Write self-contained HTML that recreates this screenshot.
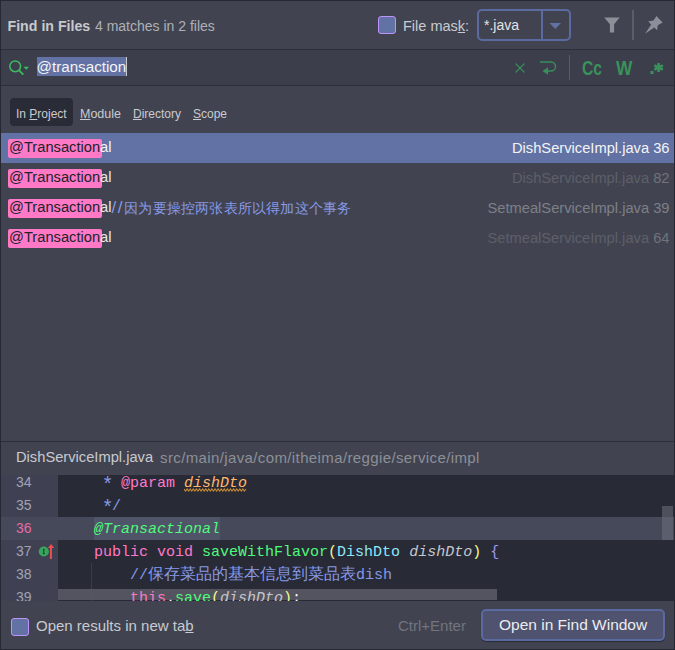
<!DOCTYPE html>
<html><head><meta charset="utf-8">
<style>
*{margin:0;padding:0;box-sizing:border-box}
html,body{width:675px;height:650px;overflow:hidden;background:#262834}
body{position:relative;font-family:"Liberation Sans",sans-serif}
.a{position:absolute}
.t{position:absolute;white-space:nowrap;line-height:1}
.sep{position:absolute;background:#2c2e39}
.mono{font-family:"Liberation Mono",monospace}
.ast{display:inline-block;transform:translateY(1.8px) scale(1.3);transform-origin:50% 35%}
.hlb{position:absolute;background:#ff79c6;border-radius:2px;left:8px;width:94px;height:19px}
.dk{color:#22232c}
.cb{position:absolute;width:17.5px;height:18px;border:1.5px solid #bd93f9;border-radius:3px;background:#6272a4}
</style></head><body>
<div class="a" style="left:1px;top:1px;width:673px;height:648px;background:#414450"></div>

<!-- header -->
<div class="t" style="left:7.5px;top:19px;font-size:14.2px;font-weight:bold;color:#c8c9cd">Find in Files</div>
<div class="t" style="left:95px;top:19px;font-size:14px;color:#aeb0b6">4 matches in 2 files</div>

<div class="cb" style="left:378px;top:16px"></div>
<div class="t" style="left:403px;top:19px;font-size:14.5px;color:#c9cacf">File mas<span style="text-decoration:underline">k</span>:</div>

<div class="a" style="left:477px;top:9px;width:94px;height:32px;border:2px solid #5b6aa0;border-radius:5px"></div>
<div class="a" style="left:541px;top:11px;width:1.5px;height:28px;background:#5b6aa0"></div>
<div class="t" style="left:484px;top:18px;font-size:14px;color:#e2e3e6">*.java</div>
<svg class="a" style="left:549px;top:22px" width="13" height="8"><path d="M0.5 1 L12 1 L6.25 7 Z" fill="#6272a4"/></svg>

<svg class="a" style="left:603px;top:16px" width="18" height="18"><path d="M1.2 1.4 H16.7 L11.1 8.3 V16.6 H6.9 V8.3 Z" fill="#8c8e98"/></svg>
<div class="a" style="left:632px;top:10px;width:2px;height:30px;background:#5b5d68"></div>
<svg class="a" style="left:640px;top:10px" width="30" height="30"><path d="M16.4 6 L22.6 12.5 L17.8 15.2 L17 20.2 L14.3 17.5 L5 23.8 L11.1 14.8 L8.3 11.2 L13.6 10.4 Z" fill="#8c8e98"/></svg>

<div class="sep" style="left:1px;top:49px;width:673px;height:1px"></div>
<!-- search row -->
<div class="a" style="left:1px;top:50px;width:673px;height:35px;background:#3c3e4c"></div>
<svg class="a" style="left:6px;top:56px" width="26" height="22"><circle cx="9.2" cy="10.3" r="5.4" fill="none" stroke="#3dbb5e" stroke-width="1.5"/><path d="M12.9 14.1 L17.3 18.6" stroke="#3dbb5e" stroke-width="1.8"/><path d="M17.5 10.8 H23 L20.25 13.8 Z" fill="#3dbb5e"/></svg>
<div class="a" style="left:37px;top:57px;width:89px;height:19px;background:#6272a4"></div>
<div class="a" style="left:126px;top:57px;width:1px;height:19px;background:#c9cacd"></div>
<div class="t" style="left:36.5px;top:59px;font-size:15.2px;color:#f4f4f6">@transaction</div>

<svg class="a" style="left:513px;top:61px" width="14" height="14"><path d="M2.5 2.5 L11.5 11.5 M11.5 2.5 L2.5 11.5" stroke="#36905a" stroke-width="1.1"/></svg>
<svg class="a" style="left:538px;top:58px" width="22" height="20"><path d="M2 4 H13 A4.5 4.5 0 0 1 13 13 H7" fill="none" stroke="#36905a" stroke-width="1.4"/><path d="M4.5 13 L10 9.2 L10 16.8 Z" fill="#36905a"/></svg>
<div class="a" style="left:569px;top:55px;width:1px;height:25px;background:#5b5d68"></div>
<div class="t" style="left:581.5px;top:58.5px;font-size:16px;font-weight:bold;color:#38925a;transform:scale(0.98,1.22);transform-origin:0 0">Cc</div>
<div class="t" style="left:616px;top:58.5px;font-size:16px;font-weight:bold;color:#38925a;transform:scale(1.08,1.22);transform-origin:0 0">W</div>
<svg class="a" style="left:648px;top:60px" width="20" height="18"><rect x="2.5" y="11" width="3" height="3" fill="#38925a"/><path d="M10.6 3 V12 M6.3 5.3 L14.9 9.7 M6.3 9.7 L14.9 5.3" stroke="#38925a" stroke-width="2.6"/></svg>

<div class="sep" style="left:1px;top:85px;width:673px;height:1px"></div>

<!-- scope tabs -->
<div class="a" style="left:10px;top:98px;width:63px;height:28px;background:#292b37;border-radius:4px"></div>
<div class="t" style="left:16px;top:108px;font-size:12px;color:#c9cacf">In <u>P</u>roject</div>
<div class="t" style="left:80px;top:108px;font-size:12.5px;color:#c9cacf"><u>M</u>odule</div>
<div class="t" style="left:133px;top:108px;font-size:12px;color:#c9cacf"><u>D</u>irectory</div>
<div class="t" style="left:193px;top:108px;font-size:12px;color:#c9cacf"><u>S</u>cope</div>

<!-- results -->
<div class="a" style="left:1px;top:133px;width:673px;height:30px;background:#6272a4"></div>
<div class="hlb" style="top:139px"></div>
<div class="hlb" style="top:169px"></div>
<div class="hlb" style="top:199px"></div>
<div class="hlb" style="top:229px"></div>
<div class="t" style="left:9px;top:140px;font-size:14.7px;color:#f4f4f6"><span class="dk">@Transaction</span>al</div>
<div class="t" style="left:9px;top:170px;font-size:14.7px;color:#e8e8ea"><span class="dk">@Transaction</span>al</div>
<div class="t" style="left:9px;top:200px;font-size:14.7px;color:#e8e8ea"><span class="dk">@Transaction</span>al<span style="color:#8799e6;font-size:17px;letter-spacing:1.6px;position:relative;top:0.5px;line-height:0">//</span><span style="color:#8799e6;font-size:14px;letter-spacing:0.2px;position:relative;top:1px;line-height:0">因为要操控两张表所以得加这个事务</span></div>
<div class="t" style="left:9px;top:230px;font-size:14.7px;color:#e8e8ea"><span class="dk">@Transaction</span>al</div>

<div class="t" style="right:5.5px;top:141px;font-size:14.7px;color:#f4f4f6">DishServiceImpl.java 36</div>
<div class="t" style="right:5.5px;top:171px;font-size:14.7px;color:#5d5f69">DishServiceImpl.java <span style="color:#70727c">82</span></div>
<div class="t" style="right:5.5px;top:201px;font-size:14.7px;color:#7d7f88">SetmealServiceImpl.java 39</div>
<div class="t" style="right:5.5px;top:231px;font-size:14.7px;color:#5d5f69">SetmealServiceImpl.java <span style="color:#70727c">64</span></div>

<div class="sep" style="left:1px;top:441px;width:673px;height:1px"></div>
<!-- preview header -->
<div class="t" style="left:16px;top:450px;font-size:14.7px;color:#c9cacf">DishServiceImpl.java</div>
<div class="t" style="left:160px;top:450px;font-size:15px;letter-spacing:0.38px;color:#8d8f98">src/main/java/com/itheima/reggie/service/impl</div>

<!-- editor -->
<div class="a" style="left:1px;top:475px;width:57px;height:126px;background:#3f4152"></div>
<div class="a" style="left:58px;top:475px;width:616px;height:126px;background:#282a36"></div>
<div class="a" style="left:1px;top:517px;width:673px;height:23px;background:#464959"></div>
<div class="a" style="left:94px;top:517px;width:126px;height:23px;background:#4f5468"></div>
<div class="a" style="left:91px;top:563px;width:1px;height:38px;background:#3a3c48"></div>
<div class="t mono" style="left:58px;top:475px;width:616px;height:126px;overflow:hidden;font-size:15px;line-height:23px;white-space:pre">
<div style="position:absolute;left:0;top:114px;width:439px;height:11px;background:rgba(90,92,102,0.85)"></div>
<div style="position:absolute;left:0;top:-3px;color:#8799e6">     <span class="ast">*</span> <span style="color:#ff79c6">@param</span> <span style="color:#ffb86c;font-style:italic">dishDto</span></div>
<div style="position:absolute;left:0;top:20px;color:#8799e6">     <span class="ast">*</span>/</div>
<div style="position:absolute;left:0;top:43px;color:#50fa7b;font-style:italic">    @Transactional</div>
<div style="position:absolute;left:0;top:66px;color:#f8f8f2">    <span style="color:#ff79c6">public void</span> <span style="color:#50fa7b">saveWithFlavor</span><span style="color:#f1fa8c">(</span><span style="color:#8be9fd">DishDto</span> <span style="font-style:italic;color:#c6c7cc">dishDto</span><span style="color:#f1fa8c">)</span> <span style="color:#a098f0">{</span></div>
<div style="position:absolute;left:0;top:89px;color:#8799e6">        //<span style="font-size:16px">保存菜品的基本信息到菜品表</span>dish</div>
<div style="position:absolute;left:0;top:112px;color:#f8f8f2">        <span style="color:#ff79c6">this</span>.<span style="color:#50fa7b">save</span><span style="color:#f1fa8c">(</span><span style="font-style:italic;color:#c6c7cc">dishDto</span><span style="color:#f1fa8c">)</span>;</div>
<div style="position:absolute;left:604px;top:31px;width:11px;height:34px;background:rgba(110,112,124,0.55)"></div>
</div>
<svg class="a" style="left:184px;top:488px" width="64" height="5"><polyline points="0.0,1.0 1.6,3.0 3.1,1.0 4.7,3.0 6.2,1.0 7.8,3.0 9.3,1.0 10.9,3.0 12.4,1.0 14.0,3.0 15.5,1.0 17.1,3.0 18.6,1.0 20.2,3.0 21.7,1.0 23.3,3.0 24.8,1.0 26.4,3.0 27.9,1.0 29.5,3.0 31.0,1.0 32.6,3.0 34.1,1.0 35.7,3.0 37.2,1.0 38.8,3.0 40.3,1.0 41.8,3.0 43.4,1.0 44.9,3.0 46.5,1.0 48.0,3.0 49.6,1.0 51.1,3.0 52.7,1.0 54.2,3.0 55.8,1.0 57.3,3.0 58.9,1.0 60.4,3.0 62.0,1.0" fill="none" stroke="#c98a34" stroke-width="1.1"/></svg>
<div class="t" style="left:16px;top:475px;font-size:14px;color:#a0a3b2">34</div>
<div class="t" style="left:16px;top:498px;font-size:14px;color:#a0a3b2">35</div>
<div class="t" style="left:16px;top:521px;font-size:14px;color:#e66aa6">36</div>
<div class="t" style="left:16px;top:544px;font-size:14px;color:#a0a3b2">37</div>
<div class="t" style="left:16px;top:567px;font-size:14px;color:#a0a3b2">38</div>
<div class="t" style="left:16px;top:590px;font-size:14px;color:#a0a3b2;height:11px;overflow:hidden">39</div>
<svg class="a" style="left:38px;top:543px" width="18" height="18"><circle cx="5.8" cy="8.5" r="5.1" fill="#37a55c"/><path d="M5.8 6.4 V10.6 M4.9 6.4 H6.7 M4.9 10.6 H6.7" stroke="#1f3b2a" stroke-width="1"/><path d="M9.8 5 L16.2 5 L13 1 Z M11.9 5 H13.9 V16 H11.9 Z" fill="#e8514f"/></svg>

<!-- bottom bar -->
<div class="cb" style="left:11px;top:618px"></div>
<div class="t" style="left:36px;top:618px;font-size:15px;color:#c9cacf">Open results in new ta<u>b</u></div>
<div class="t" style="left:398px;top:617.5px;font-size:15px;color:#72747f">Ctrl+Enter</div>
<div class="a" style="left:481px;top:609px;width:184px;height:32px;border:2px solid #5b6aa0;border-radius:5px;background:#4f5370;box-shadow:0 1px 1px #2a2c36"></div>
<div class="t" style="left:499px;top:617px;font-size:15.5px;color:#ececee">Open in Find Window</div>
</body></html>
